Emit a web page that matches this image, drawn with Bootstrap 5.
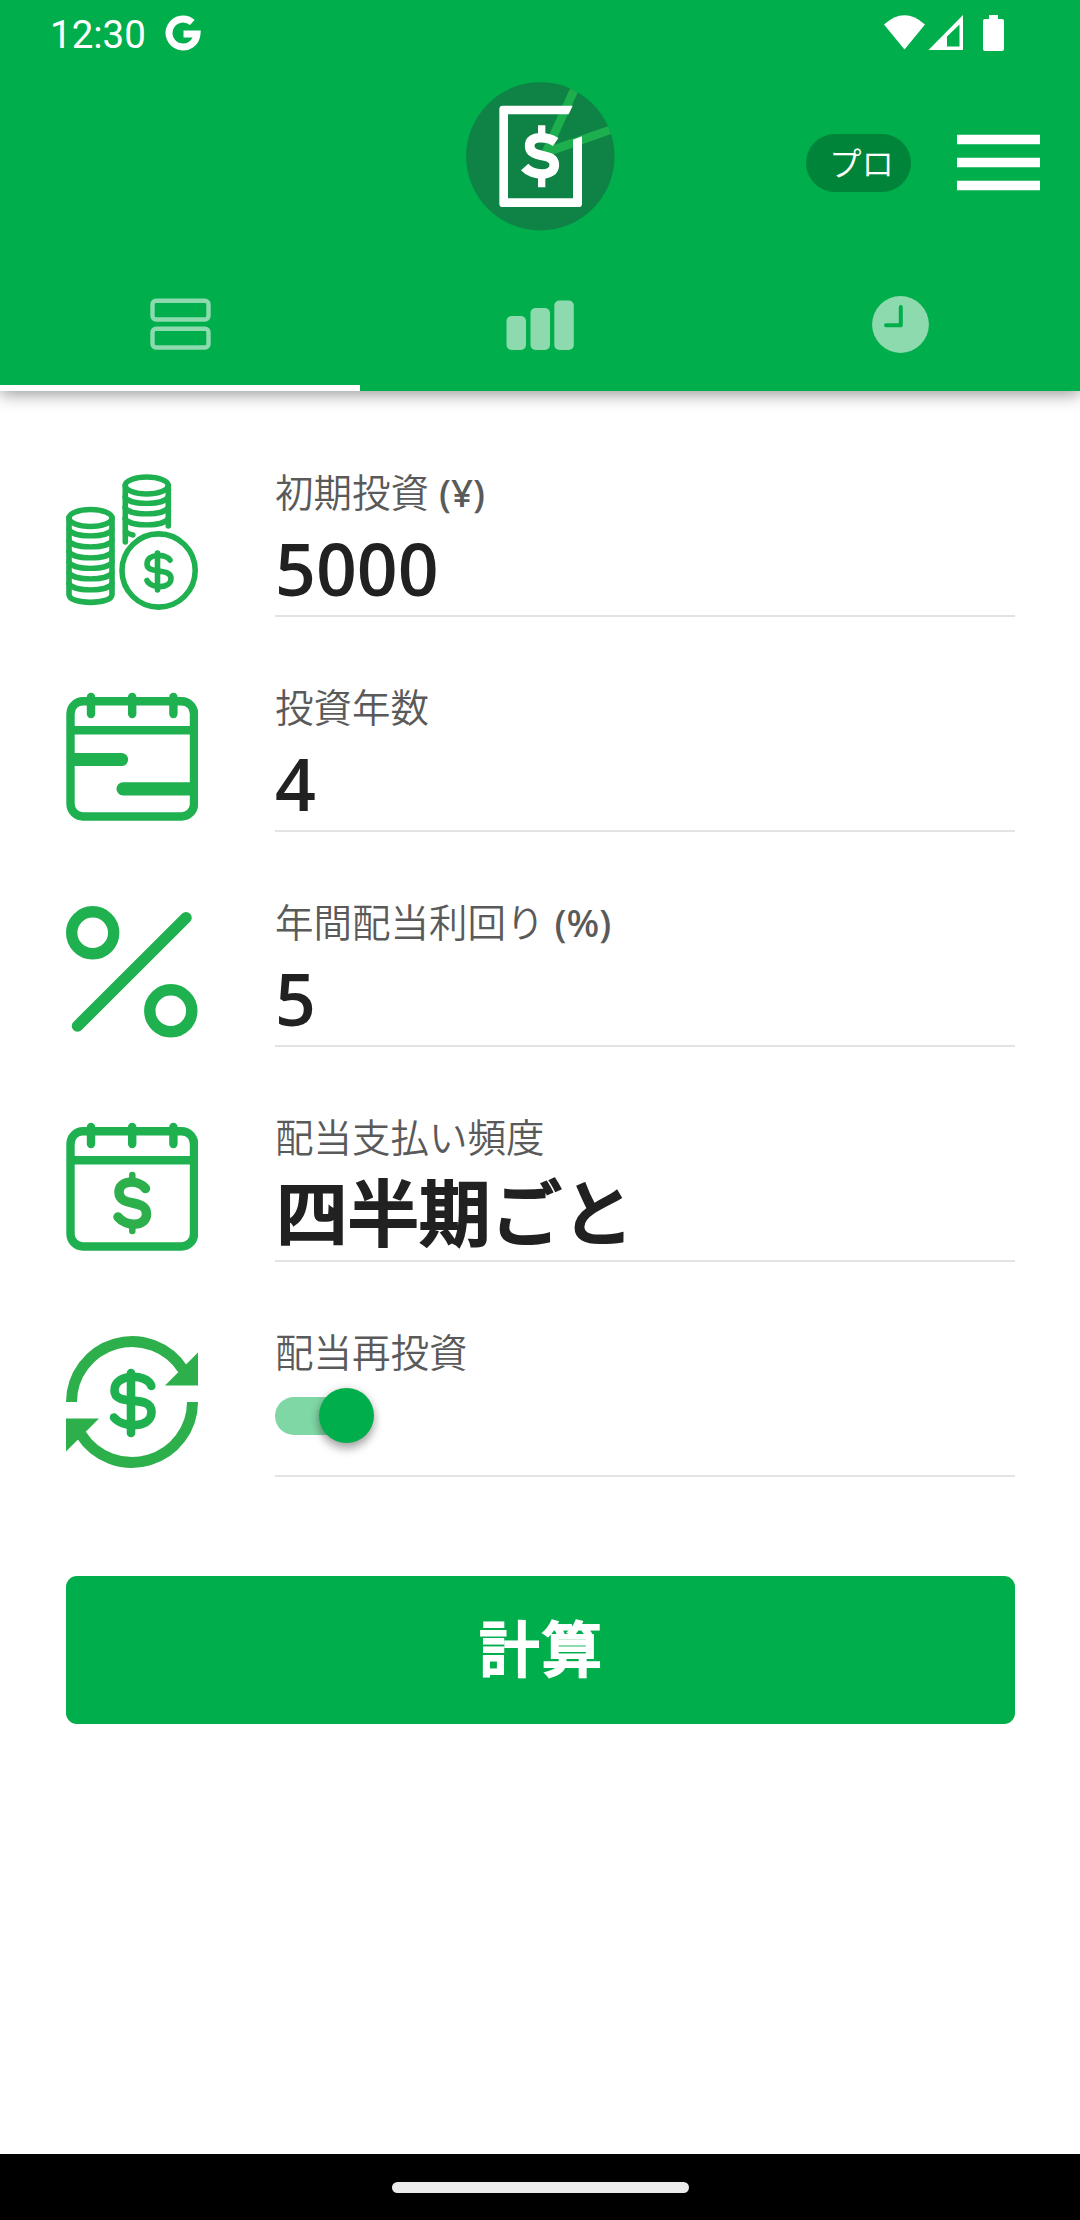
<!DOCTYPE html>
<html lang="ja">
<head>
<meta charset="utf-8">
<meta name="viewport" content="width=device-width, initial-scale=1">
<title>配当計算</title>
<link href="https://cdn.jsdelivr.net/npm/bootstrap@5.3.0/dist/css/bootstrap.min.css" rel="stylesheet">
<style>
  :root { --brand: #01ae4c; --ink: #212121; --icon: #1fb050; }
  body { font-family: "Open Sans", "Noto Sans CJK JP", sans-serif; color: var(--ink); background: #fff; }
  svg { display: block; flex: none; }
  .app-screen { width: 1080px; height: 2220px; overflow: hidden; }
  .app-head { background: var(--brand); height: 391px; box-shadow: 0 3px 16px rgba(0,0,0,.42); clip-path: inset(0 0 -24px 0); flex: none; }
  .status-row { height: 66px; padding: 0 75px 0 50px; }
  .status-time { font: 400 38.5px/66px Roboto, sans-serif; padding-top: 3px; }
  .status-g { margin-left: 19px; }
  .tool-row { height: 193px; padding: 0 40px; }
  .tool-side { flex: 1 1 0; gap: 46px; }
  .tool-logo { padding-bottom: 13px; }
  .pro-pill { width: 105px; height: 58px; background: #00843a; font: 350 32.500px/56px "Noto Sans CJK JP", sans-serif; padding-left: 6px; }
  .tab-row { height: 132px; }
  .tab-row .nav-link { height: 132px; color: #8cdaae; border-radius: 0; padding: 0; border-bottom: 6px solid transparent; padding-top: 5px; flex-basis: 0; }
  .tab-row .nav-link.active { border-bottom-color: #fff; padding-top: 4px; }
  .form-area { padding: 11px 65px 0 66px; }
  .field-row { height: 215px; gap: 77px; }
  .field-icon { width: 132px; height: 136px; margin-top: 72px; color: var(--icon); }
  .field-body { border-bottom: 2px solid #e3e3e3; padding-top: 63px; }
  .field-label { font-family: "Noto Sans", "Noto Sans CJK JP", sans-serif; font-size: 38.5px; line-height: 54px; font-weight: 500; color: #5a5a5a; white-space: pre; }
  .field-label span { font-weight: 350; }
  .field-value { font-size: 71.5px; line-height: 99px; font-weight: 600; }
  .field-value.jp { font-weight: 500; font-family: "Noto Sans CJK JP", sans-serif; line-height: 91px; padding-left: 1px; -webkit-text-stroke: 2.200px currentColor; }
  .toggle-track { width: 88px; height: 38px; margin-top: 18px; background: #80d7a6; position: relative; }
  .toggle-thumb { position: absolute; right: -11px; top: -9px; width: 55px; height: 55px; background: var(--brand); box-shadow: 0 6px 10px rgba(0,0,0,.28), 0 1px 10px rgba(0,0,0,.16); }
  .calc-btn { --bs-btn-bg: var(--brand); --bs-btn-color: #fff; --bs-btn-border-width: 0; height: 148px; margin-top: 99px; border-radius: 11px; font: 500 60.5px/1 "Noto Sans CJK JP", sans-serif; letter-spacing: 2px; padding: 0 0 8px 2px; -webkit-text-stroke: 2px currentColor; }
  .home-strip { height: 66px; background: #000; flex: none; }
  .home-pill { width: 297px; height: 11px; background: #ebebeb; }
</style>
<script src="https://cdn.jsdelivr.net/npm/bootstrap@5.3.0/dist/js/bootstrap.bundle.min.js"></script>
</head>
<body>
<div class="app-screen d-flex flex-column">
  <header class="app-head text-white">
    <div class="status-row d-flex align-items-center">
      <span class="status-time">12:30</span>
      <svg class="status-g me-auto" width="36" height="36" viewBox="0 0 36 36"><path d="M27.3 7.5A14 14 0 1 0 32 19H18.5" fill="none" stroke="#fff" stroke-width="7" /></svg>
      <svg width="121" height="38" viewBox="0 0 121 38" fill="#fff">
        <path d="M0 10.5Q20.500-8 41 10.500L20.500 35.500Z"/>
        <path fill-rule="evenodd" d="M44.500 36L79 1V36ZM63 32.500H75.500V10.500L63 22.500Z"/>
        <path d="M105 1h9v4h4q2 0 2 2v28q0 2-2 2h-17q-2 0-2-2V7q0-2 2-2h4z"/>
      </svg>
    </div>
    <div class="tool-row d-flex align-items-center">
      <div class="tool-side"></div>
      <div class="tool-logo">
        <svg width="149" height="149" viewBox="78 65 447 447">
          <clipPath id="disc"><circle cx="301" cy="288" r="222.500"/></clipPath>
          <circle cx="301" cy="288" r="222.500" fill="#0e8345"/>
          <g clip-path="url(#disc)" stroke="#1dae4d" stroke-width="26" fill="none"><path d="M408 76L318 276L530 202"/></g>
          <path d="M398 136H188q-10 0-10 10V430q0 10 10 10H416q10 0 10-10V228L399 238V414H204V162H386Z" fill="#fff"/>
          <path d="M305 195V240M305 335V381" stroke="#fff" stroke-width="22"/>
          <path d="M347 245C325 230 268 222 269 257C270 298 343 274 343 313C343 351 277 347 254 320" fill="none" stroke="#fff" stroke-width="29"/>
        </svg>
      </div>
      <div class="tool-side d-flex justify-content-end align-items-center">
        <span class="pro-pill rounded-pill text-center">プロ</span>
        <svg width="83" height="57" viewBox="0 0 83 57"><path d="M0 5.500H83M0 28.500H83M0 51.500H83" stroke="#fff" stroke-width="9.600"/></svg>
      </div>
    </div>
    <nav class="tab-row nav nav-fill">
      <a class="nav-item nav-link active d-flex align-items-center justify-content-center">
        <svg width="61" height="52" viewBox="0 0 61 52" fill="none" stroke="currentColor" stroke-width="4.400"><rect x="2.500" y="2.700" width="56" height="18.800" rx="3.500"/><rect x="2.500" y="30.700" width="56" height="18.800" rx="3.500"/></svg>
      </a>
      <a class="nav-item nav-link d-flex align-items-center justify-content-center">
        <svg width="68" height="50" viewBox="0 0 68 50" fill="currentColor"><rect x="0.500" y="16" width="19.500" height="34" rx="5"/><rect x="24.500" y="8" width="19.500" height="42" rx="5"/><rect x="48.300" y="0.500" width="19.500" height="49.500" rx="5"/></svg>
      </a>
      <a class="nav-item nav-link d-flex align-items-center justify-content-center">
        <svg width="57" height="57" viewBox="0 0 57 57"><circle cx="28.500" cy="28.500" r="28.400" fill="currentColor"/><path d="M28.800 11V29.300H14" fill="none" stroke="#01ae4c" stroke-width="4" stroke-linecap="round" stroke-linejoin="round"/></svg>
      </a>
    </nav>
  </header>

  <main class="form-area flex-grow-1">
    <div class="field-row d-flex">
      <svg class="field-icon" viewBox="66 474 132 136" fill="none" stroke="currentColor" stroke-width="5.600" stroke-linecap="round">
        <ellipse cx="90.500" cy="518" rx="21.500" ry="8.500"/>
        <path d="M69 518V594.500C69 605 112 605 112 594.500V518"/>
        <path d="M69 529.500c4 8.500 39 8.500 43 0M69 540.500c4 8.500 39 8.500 43 0M69 551.500c4 8.500 39 8.500 43 0M69 562c4 8.500 39 8.500 43 0M69 572.500c4 8.500 39 8.500 43 0M69 583.500c4 8.500 39 8.500 43 0" stroke-width="5.400"/>
        <ellipse cx="146.700" cy="485.500" rx="21.500" ry="8.500"/>
        <path d="M125.300 485.500V542M168.300 485.500V526"/>
        <path d="M125 497c4 8.500 39 8.500 43 0M125 507.500c4 8.500 39 8.500 43 0M125 518.500c4 8.500 39 8.500 43 0M125.500 531.500Q129 534.500 133 535" stroke-width="5.400"/>
        <circle cx="158.600" cy="570.500" r="36.600" fill="#fff"/>
        <path d="M157.500 553V590M170 560C166 553.500 147 553 147 564C147 575 171 567 171 578.500C171 589 151 589 147 580.500" stroke-width="5.600"/>
      </svg>
      <div class="field-body flex-grow-1">
        <div class="field-label"><span>初期投資</span> (¥)</div>
        <div class="field-value">5000</div>
      </div>
    </div>
    <div class="field-row d-flex">
      <svg class="field-icon" viewBox="66 689 132 136" fill="none" stroke="currentColor" stroke-width="8.400" stroke-linecap="round">
        <rect x="70.500" y="701.200" width="123.500" height="115.300" rx="12.500"/>
        <path d="M71 730.200H194M91 697V714M132.200 697V714M173.400 697V714"/>
        <path d="M74 759.500H121.500M123 788.800H190" stroke-width="13.200"/>
      </svg>
      <div class="field-body flex-grow-1">
        <div class="field-label"><span>投資年数</span></div>
        <div class="field-value">4</div>
      </div>
    </div>
    <div class="field-row d-flex">
      <svg class="field-icon" viewBox="66 904 132 136" fill="none" stroke="currentColor" stroke-linecap="round">
        <circle cx="92.700" cy="932.800" r="21" stroke-width="11.400"/><circle cx="170.800" cy="1010.800" r="21" stroke-width="11.400"/>
        <path d="M77.500 1026L186 917.800" stroke-width="11.500"/>
      </svg>
      <div class="field-body flex-grow-1">
        <div class="field-label"><span>年間配当利回り</span> (%)</div>
        <div class="field-value">5</div>
      </div>
    </div>
    <div class="field-row d-flex">
      <svg class="field-icon" viewBox="66 1119 132 136" fill="none" stroke="currentColor" stroke-width="8.400" stroke-linecap="round">
        <rect x="70.500" y="1131.200" width="123.500" height="115.300" rx="12.500"/>
        <path d="M71 1160.200H194M91 1127V1144M132.200 1127V1144M173.400 1127V1144"/>
        <g stroke="#2db04c"><path d="M132.300 1175V1182M132.300 1226V1231" stroke-width="6.500"/>
        <path d="M145.500 1188.500C138 1179 119 1180 119 1192C119 1208 146.500 1198 146.500 1214C146.500 1227 126 1227 118 1217" stroke-width="9.500"/></g>
      </svg>
      <div class="field-body flex-grow-1">
        <div class="field-label"><span>配当支払い頻度</span></div>
        <div class="field-value jp">四半期ごと</div>
      </div>
    </div>
    <div class="field-row d-flex">
      <svg class="field-icon" viewBox="66 1334 132 136" fill="none" stroke="#2db04c" stroke-width="11">
        <path d="M71.500 1402A60.500 60.500 0 0 1 183 1369.500M192.500 1402A60.500 60.500 0 0 1 81 1434.500"/>
        <path d="M198 1352.500V1385.500H165ZM66 1451.500V1418.500H99Z" fill="#2db04c" stroke="none"/>
        <g stroke="#1fb050" stroke-width="8.600" stroke-linecap="round"><path d="M131 1373V1433"/><path d="M151.300 1386C147 1373 114.500 1373 114.500 1390.500C114.500 1408 151.500 1393 151.500 1412C151.500 1429 122 1428 114 1417.500"/></g>
      </svg>
      <div class="field-body flex-grow-1">
        <div class="field-label"><span>配当再投資</span></div>
        <div class="toggle-track rounded-pill" role="switch" aria-checked="true"><div class="toggle-thumb rounded-circle"></div></div>
      </div>
    </div>
    <button type="button" class="btn calc-btn w-100 d-flex align-items-center justify-content-center">計算</button>
  </main>

  <footer class="home-strip d-flex align-items-center justify-content-center"><div class="home-pill rounded-pill"></div></footer>
</div>
</body>
</html>
